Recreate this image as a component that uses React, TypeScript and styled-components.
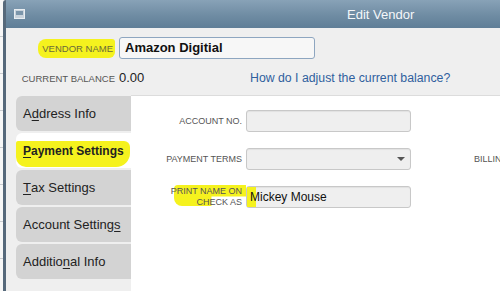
import styled, { createGlobalStyle } from "styled-components";

const GlobalStyle = createGlobalStyle`
  html, body {
    margin: 0;
    padding: 0;
    background: #f6f6f6;
    font-family: "Liberation Sans", Arial, sans-serif;
  }
`;

const tabs = [
  { key: "address", label: "Address Info", u: 1 },
  { key: "payment", label: "Payment Settings", u: 0 },
  { key: "tax", label: "Tax Settings", u: 0 },
  { key: "account", label: "Account Settings", u: 15 },
  { key: "additional", label: "Additional Info", u: 7 },
];

const Underlined: React.FC<{ text: string; at: number }> = ({ text, at }) => (
  <>
    {text.slice(0, at)}
    <u>{text[at]}</u>
    {text.slice(at + 1)}
  </>
);

const App: React.FC = () => {
  const active = "payment";

  return (
    <>
      <GlobalStyle />
      <Desktop>
        <Backdrop />
        <Window>
          <TitleBar>
            <svg width="11" height="10" viewBox="0 0 11 10">
              <rect x="0.5" y="0.5" width="10" height="9" fill="#c9d3dc" stroke="#e8edf1" />
              <rect x="2" y="2" width="7" height="4" fill="#7b95aa" />
            </svg>
            <Title>Edit Vendor</Title>
          </TitleBar>
          <Body>
            <HeaderRow>
              <HeaderLabel>
                <Marker>VENDOR NAME</Marker>
              </HeaderLabel>
              <NameInput>Amazon Digitial</NameInput>
            </HeaderRow>
            <BalanceRow>
              <HeaderLabel>CURRENT BALANCE</HeaderLabel>
              <Balance>0.00</Balance>
              <HelpLink>How do I adjust the current balance?</HelpLink>
            </BalanceRow>
            <Main>
              <TabList>
                {tabs.map((t) => (
                  <Tab key={t.key} $active={t.key === active}>
                    {t.key === active ? (
                      <TabMarker>
                        <Underlined text={t.label} at={t.u} />
                      </TabMarker>
                    ) : (
                      <Underlined text={t.label} at={t.u} />
                    )}
                  </Tab>
                ))}
              </TabList>
              <Panel>
                <FieldRow>
                  <FieldLabel>ACCOUNT NO.</FieldLabel>
                  <Field />
                </FieldRow>
                <FieldRow>
                  <FieldLabel>PAYMENT TERMS</FieldLabel>
                  <Field>
                    <Caret />
                  </Field>
                  <SideLabel>BILLING RATE LEVEL</SideLabel>
                </FieldRow>
                <FieldRow>
                  <FieldLabel>
                    <LabelMarker />
                    <LabelText>
                      PRINT NAME ON
                      <br />
                      CHECK AS
                    </LabelText>
                  </FieldLabel>
                  <Field>
                    <FieldMarker />
                    <FieldText>Mickey Mouse</FieldText>
                  </Field>
                </FieldRow>
              </Panel>
            </Main>
          </Body>
        </Window>
      </Desktop>
    </>
  );
};

export default App;

const Desktop = styled.div`
  width: 500px;
  height: 291px;
  display: flex;
  overflow: hidden;
`;

const Backdrop = styled.div`
  width: 3px;
  flex-shrink: 0;
  background: repeating-linear-gradient(
    to bottom,
    #f7f7f7 0px,
    #f7f7f7 36px,
    #c9ccd0 36px,
    #c9ccd0 37px
  );
`;

const Window = styled.div`
  flex: 1;
  display: flex;
  flex-direction: column;
  border-left: 3px solid #56697b;
  border-top-left-radius: 3px;
  min-width: 0;
`;

const TitleBar = styled.div`
  height: 28px;
  flex-shrink: 0;
  display: flex;
  align-items: center;
  padding-left: 8px;
  background: linear-gradient(to bottom, #88a2b7 0%, #6f8ca3 55%, #5f7e97 100%);
  color: #fff;
`;

const Title = styled.div`
  margin-left: 322px;
  font-size: 13px;
  color: #f4f7fa;
`;

const Body = styled.div`
  flex: 1;
  background: #efefef;
  display: flex;
  flex-direction: column;
  min-height: 0;
`;

const HeaderRow = styled.div`
  display: flex;
  align-items: center;
  gap: 4px;
  padding: 9px 0 0 0;
`;

const HeaderLabel = styled.div`
  width: 109px;
  flex-shrink: 0;
  text-align: right;
  font-size: 9.5px;
  color: #555;
`;

const Marker = styled.span`
  background: #f5f21e;
  padding: 4px 2px 4px 4px;
  border-radius: 8px 3px 6px 8px;
  color: #6a6a3a;
`;

const NameInput = styled.div`
  width: 189px;
  height: 20px;
  line-height: 20px;
  padding-left: 5px;
  border: 1px solid #8ea6c0;
  border-radius: 3px;
  background: #f7f7f7;
  font-size: 13px;
  font-weight: bold;
  color: #111;
`;

const BalanceRow = styled.div`
  display: flex;
  align-items: baseline;
  gap: 4px;
  padding-top: 11px;
  height: 18px;
`;

const Balance = styled.div`
  font-size: 13px;
  color: #222;
  width: 127px;
`;

const HelpLink = styled.div`
  font-size: 12.3px;
  color: #2f5f9e;
`;

const Main = styled.div`
  flex: 1;
  display: flex;
  margin-top: 7px;
  padding-left: 10px;
`;

const TabList = styled.div`
  width: 115px;
  flex-shrink: 0;
  display: flex;
  flex-direction: column;
  gap: 2px;
  padding-top: 1px;
`;

const Tab = styled.div<{ $active: boolean }>`
  height: 35px;
  display: flex;
  align-items: center;
  padding-left: 7px;
  border-radius: 6px 0 0 6px;
  background: ${(p) => (p.$active ? "#ffffff" : "#d3d3d3")};
  font-size: ${(p) => (p.$active ? "12px" : "13px")};
  font-weight: ${(p) => (p.$active ? "bold" : "normal")};
  white-space: nowrap;
  color: #222;
  position: relative;
  z-index: ${(p) => (p.$active ? 1 : 0)};
  margin-right: ${(p) => (p.$active ? "-1px" : "0")};

  u {
    text-decoration-thickness: 1px;
    text-underline-offset: 2px;
  }
`;

const TabMarker = styled.span`
  background: #f5f21e;
  padding: 3px 6px 9px 7px;
  margin-left: -7px;
  margin-top: 7px;
  border-radius: 2px 6px 14px 10px;
`;

const Panel = styled.div`
  flex: 1;
  background: #fff;
  border-top: 1px solid #dcdcdc;
  display: flex;
  flex-direction: column;
  gap: 16px;
  padding-top: 14px;
`;

const FieldRow = styled.div`
  display: flex;
  align-items: center;
  gap: 4px;
  height: 22px;
`;

const FieldLabel = styled.div`
  width: 111px;
  flex-shrink: 0;
  text-align: right;
  font-size: 9px;
  line-height: 11px;
  color: #555;
  position: relative;
`;

const LabelMarker = styled.div`
  position: absolute;
  left: 43px;
  right: -4px;
  top: -1px;
  height: 21px;
  background: #f5f21e;
  border-radius: 4px 0 0 8px;
  clip-path: polygon(0 0, 100% 0, 100% 55%, 52% 55%, 52% 100%, 0 100%);
`;

const LabelText = styled.span`
  position: relative;
`;

const Field = styled.div`
  width: 163px;
  height: 20px;
  border: 1px solid #c8c8c8;
  border-radius: 3px;
  background: #efefef;
  box-shadow: inset 0 1px 1px rgba(0, 0, 0, 0.06);
  display: flex;
  align-items: center;
  position: relative;
`;

const FieldMarker = styled.div`
  position: absolute;
  left: 0;
  top: 0;
  bottom: 0;
  width: 9px;
  background: #f5f21e;
`;

const FieldText = styled.span`
  position: relative;
  font-size: 12px;
  color: #111;
  padding-left: 3px;
`;

const Caret = styled.span`
  position: absolute;
  right: 5px;
  top: 8px;
  border-left: 4px solid transparent;
  border-right: 4px solid transparent;
  border-top: 4px solid #555;
`;

const SideLabel = styled.div`
  margin-left: 59px;
  font-size: 9px;
  color: #555;
  white-space: nowrap;
`;
